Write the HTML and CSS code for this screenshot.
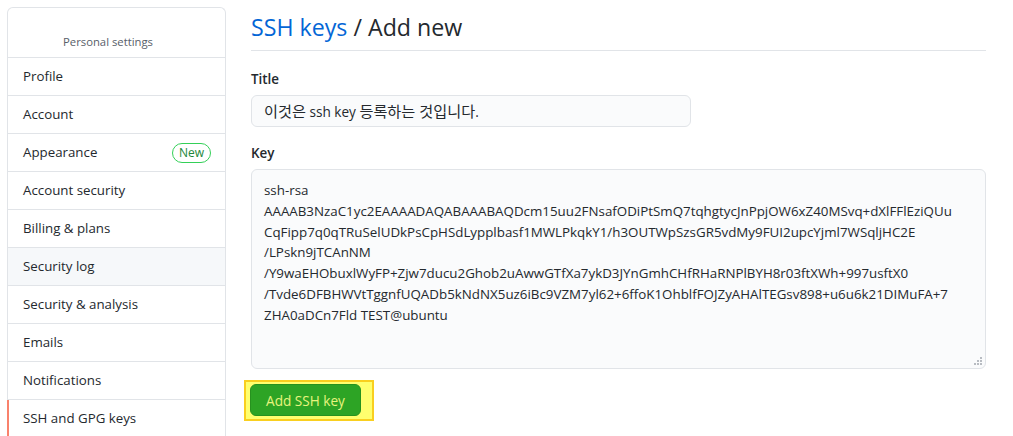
FILE: index.html
```html
<!DOCTYPE html>
<html lang="ko">
<head>
<meta charset="utf-8">
<title>SSH keys / Add new</title>
<link rel="stylesheet" href="styles.css">
</head>
<body>
<div class="page">
  <nav class="menu">
    <div class="menu-heading">Personal settings</div>
    <a class="menu-item">Profile</a>
    <a class="menu-item">Account</a>
    <a class="menu-item">Appearance <span class="badge-new">New</span></a>
    <a class="menu-item">Account security</a>
    <a class="menu-item">Billing &amp; plans</a>
    <a class="menu-item hover">Security log</a>
    <a class="menu-item">Security &amp; analysis</a>
    <a class="menu-item">Emails</a>
    <a class="menu-item">Notifications</a>
    <a class="menu-item selected">SSH and GPG keys</a>
  </nav>
  <main class="main">
    <div class="subhead"><h2 class="subhead-title"><a class="link">SSH keys</a> / Add new</h2></div>
    <div class="form-group">
      <label class="label">Title</label>
      <div class="input"><span class="ko">이것은</span> ssh key <span class="ko">등록하는 것입니다</span>.</div>
    </div>
    <div class="form-group last">
      <label class="label">Key</label>
      <div class="textarea">
        <div class="line">ssh-rsa</div>
        <div class="line">AAAAB3NzaC1yc2EAAAADAQABAAABAQDcm15uu2FNsafODiPtSmQ7tqhgtycJnPpjOW6xZ40MSvq+dXlFFlEziQUu</div>
        <div class="line">CqFipp7q0qTRuSelUDkPsCpHSdLypplbasf1MWLPkqkY1/h3OUTWpSzsGR5vdMy9FUI2upcYjml7WSqljHC2E</div>
        <div class="line">/LPskn9jTCAnNM</div>
        <div class="line">/Y9waEHObuxlWyFP+Zjw7ducu2Ghob2uAwwGTfXa7ykD3JYnGmhCHfRHaRNPlBYH8r03ftXWh+997usftX0</div>
        <div class="line">/Tvde6DFBHWVtTggnfUQADb5kNdNX5uz6iBc9VZM7yl62+6ffoK1OhblfFOJZyAHAlTEGsv898+u6u6k21DIMuFA+7</div>
        <div class="line">ZHA0aDCn7Fld TEST@ubuntu</div>
        <svg class="grip" width="8" height="8" viewBox="0 0 8 8"><rect x="6" y="0" width="2" height="2"/><rect x="3" y="3" width="2" height="2"/><rect x="6" y="3" width="2" height="2"/><rect x="0" y="6" width="2" height="2"/><rect x="3" y="6" width="2" height="2"/><rect x="6" y="6" width="2" height="2"/></svg>
      </div>
    </div>
    <div class="actions">
      <span class="highlight"><button class="btn-primary">Add SSH key</button></span>
    </div>
  </main>
</div>
</body>
</html>
```
FILE: styles.css
```css
html, body { margin: 0; padding: 0; background: #fff; }
body {
  font-family: "Open Sans", "Noto Sans CJK KR", sans-serif;
  font-size: 13.4px;
  color: #24292e;
  line-height: 1.5;
  overflow: hidden;
  height: 436px;
}
.page {
  display: flex;
  gap: 25px;
  padding: 7px 27px 0 7px;
}
.menu {
  width: 219px;
  flex: none;
  box-sizing: border-box;
  border: 1px solid #e1e4e8;
  border-bottom: none;
  border-radius: 6px 6px 0 0;
  display: flex;
  flex-direction: column;
}
.menu-heading {
  height: 49px;
  box-sizing: border-box;
  padding: 24px 0 0 55px;
  font-size: 11.3px;
  color: #586069;
  line-height: 20px;
}
.menu-item {
  display: flex;
  align-items: center;
  justify-content: space-between;
  height: 38px;
  box-sizing: border-box;
  border-top: 1px solid #e1e4e8;
  padding: 1px 15px 0 15px;
  color: #24292e;
  font-size: 13.3px;
  position: relative;
}
.menu-item.hover { background: #f6f8fa; }
.menu-item.selected::before {
  content: "";
  position: absolute;
  left: -1px;
  top: 0;
  bottom: 0;
  width: 2px;
  background: #f9826c;
}
.badge-new {
  display: inline-block;
  height: 20px;
  box-sizing: border-box;
  padding: 0 6px;
  border: 1px solid #34d058;
  border-radius: 10px;
  color: #22863a;
  font-size: 12px;
  line-height: 18px;
  margin-right: -1px;
  margin-top: -1px;
}
.main { flex: 1; min-width: 0; }
.subhead {
  border-bottom: 1px solid #e1e4e8;
  padding: 2px 0 5px;
  margin-bottom: 18px;
}
.subhead-title {
  margin: 0;
  font-size: 23.2px;
  font-weight: 400;
  line-height: 36px;
}
.link { color: #0366d6; text-decoration: none; }
.form-group { margin-bottom: 16px; }
.form-group.last { margin-bottom: 11px; }
.label {
  display: block;
  font-weight: 600;
  line-height: 21px;
  margin-bottom: 5px;
}
.input {
  width: 440px;
  height: 32px;
  box-sizing: border-box;
  border: 1px solid #e1e4e8;
  border-radius: 6px;
  background: #fafbfc;
  padding: 0 12px;
  line-height: 30px;
  font-size: 13.6px;
}
.ko { font-size: 15.2px; }
.textarea {
  position: relative;
  height: 200px;
  box-sizing: border-box;
  border: 1px solid #e1e4e8;
  border-radius: 6px;
  background: #fafbfc;
  padding: 10px 12px;
  line-height: 20.8px;
  font-size: 13.35px;
}
.line { white-space: nowrap; }
.grip {
  position: absolute;
  right: 3px;
  bottom: 3px;
  fill: #b8bcc2;
}
.actions { display: flex; }
.highlight {
  display: inline-flex;
  margin-left: -7px;
  padding: 2px 11px 3px 4px;
  border: 2px solid #f9cf1f;
  background: #ffff6e;
}
.btn-primary {
  width: 111px;
  height: 32px;
  border: 1px solid #27921f;
  border-radius: 6px;
  background: #2da425;
  color: #e8f47e;
  font-family: inherit;
  font-size: 13.6px;
  padding: 0;
}
```
